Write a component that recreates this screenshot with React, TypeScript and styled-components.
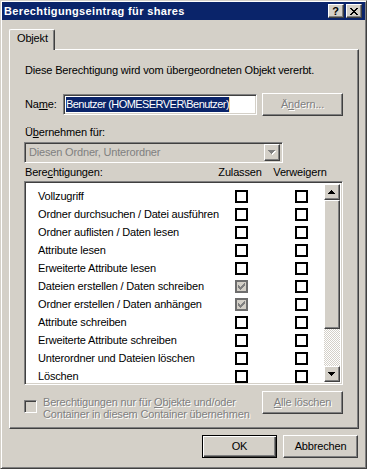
import styled, { createGlobalStyle, css } from 'styled-components'

const GlobalStyle = createGlobalStyle`
    html, body {
        margin: 0;
        padding: 0;
        background: #d4d0c8;
    }
    body {
        font-family: "Liberation Sans", Arial, sans-serif;
        font-size: 11px;
        letter-spacing: -0.17px;
        color: #000;
    }
`

const raised = css`
    box-sizing: border-box;
    background: #d4d0c8;
    border: 1px solid;
    border-color: #fff #404040 #404040 #fff;
    box-shadow: inset -1px -1px #808080;
`
const sunken = css`
    box-sizing: border-box;
    border: 1px solid;
    border-color: #808080 #fff #fff #808080;
    box-shadow: inset 1px 1px #404040, inset -1px -1px #d4d0c8;
`
const disabledText = css`
    color: #808080;
    text-shadow: 1px 1px #fff;
`

const Window = styled.div`
    width: 367px;
    height: 469px;
    box-sizing: border-box;
    background: #d4d0c8;
    border: 1px solid;
    border-color: #d4d0c8 #404040 #404040 #d4d0c8;
    box-shadow: inset 1px 1px #fff, inset -1px -1px #808080;
    padding: 1px;
    display: flex;
    flex-direction: column;
`
const TitleBar = styled.div`
    height: 18px;
    background: #0a246a;
    display: flex;
    align-items: center;
    padding: 0 3px 0 2px;
`
const TitleText = styled.div`
    flex: 1;
    color: #fff;
    font-weight: bold;
    letter-spacing: 0.35px;
    line-height: 13px;
`
const TitleButton = styled.div`
    ${raised};
    width: 16px;
    height: 14px;
    margin-left: 2px;
    display: flex;
    align-items: center;
    justify-content: center;
    font-weight: bold;
    font-size: 11px;
    line-height: 10px;
    padding-right: 1px;
`
const Body = styled.div`
    flex: 1;
    display: flex;
    flex-direction: column;
    padding: 9px 6px 0 7px;
`
const TabStrip = styled.div`
    display: flex;
    height: 20px;
    align-items: flex-start;
`
const Tab = styled.div`
    position: relative;
    z-index: 1;
    box-sizing: border-box;
    width: 46px;
    height: 21px;
    background: #d4d0c8;
    border-left: 1px solid #fff;
    border-top: 1px solid #fff;
    border-right: 1px solid #404040;
    border-radius: 2px 2px 0 0;
    box-shadow: inset -1px 0 #808080;
    padding: 2px 0 0 7px;
    line-height: 13px;
`
const Panel = styled.div`
    box-sizing: border-box;
    background: #d4d0c8;
    border: 1px solid;
    border-color: #fff #404040 #404040 #fff;
    box-shadow: inset -1px -1px #808080;
    padding: 14px 15px 14px 14px;
    display: flex;
    flex-direction: column;
`
const Text = styled.div<{ $gap?: number }>`
    margin-top: ${(p) => p.$gap ?? 0}px;
    line-height: 13px;
    padding-left: 1px;
`
const Key = styled.span`
    text-decoration: underline;
`
const Row = styled.div<{ $gap: number; $height: number }>`
    margin-top: ${(p) => p.$gap}px;
    height: ${(p) => p.$height}px;
    display: flex;
    align-items: center;
`
const NameLabel = styled.div`
    width: 38px;
    padding-left: 1px;
    line-height: 13px;
`
const NameInput = styled.div`
    ${sunken};
    width: 194px;
    height: 21px;
    background: #fff;
    padding: 2px;
    display: flex;
    align-items: center;
`
const Selection = styled.span`
    background: #0a246a;
    color: #fff;
    line-height: 15px;
    letter-spacing: -0.55px;
    white-space: nowrap;
`
const Caret = styled.span`
    width: 1px;
    height: 15px;
    background: #f5db95;
`
const Button = styled.div<{ $width: number; $default?: boolean; $disabled?: boolean }>`
    box-sizing: border-box;
    width: ${(p) => p.$width}px;
    height: 23px;
    background: #d4d0c8;
    display: flex;
    align-items: center;
    justify-content: center;
    line-height: 13px;
    ${(p) =>
        p.$default
            ? css`
                  border: 1px solid #000;
                  box-shadow: inset 1px 1px #fff, inset -1px -1px #404040,
                      inset -2px -2px #808080;
              `
            : css`
                  border: 1px solid;
                  border-color: #fff #404040 #404040 #fff;
                  box-shadow: inset -1px -1px #808080;
              `}
    ${(p) => p.$disabled && disabledText};
`
const Combo = styled.div`
    ${sunken};
    width: 259px;
    height: 21px;
    margin-top: 3px;
    background: #d4d0c8;
    padding: 2px;
    display: flex;
    align-items: center;
`
const ComboText = styled.div`
    flex: 1;
    color: #808080;
    padding-left: 2px;
    line-height: 13px;
`
const ComboButton = styled.div`
    ${raised};
    width: 16px;
    height: 17px;
    display: flex;
    align-items: center;
    justify-content: center;
`
const HeaderRow = styled.div`
    margin-top: 3px;
    display: grid;
    grid-template-columns: 186px 60px 60px;
    line-height: 13px;
`
const HeaderCell = styled.div<{ $center?: boolean }>`
    text-align: ${(p) => (p.$center ? 'center' : 'left')};
    padding-left: ${(p) => (p.$center ? 0 : 1)}px;
`
const ListBox = styled.div`
    ${sunken};
    margin-top: 2px;
    height: 204px;
    background: #fff;
    padding: 2px;
    display: flex;
`
const ListRows = styled.div`
    flex: 1;
    padding: 3px 0 0 11px;
`
const ListRow = styled.div`
    height: 18px;
    display: grid;
    grid-template-columns: 197px 13px 47px 13px;
    align-items: center;
    line-height: 13px;
    white-space: nowrap;
`
const Box = styled.div<{ $checked?: boolean }>`
    box-sizing: border-box;
    width: 13px;
    height: 13px;
    border: 2px solid ${(p) => (p.$checked ? '#6e6e6e' : '#000')};
    background: ${(p) => (p.$checked ? '#d4d0c8' : '#fff')};
    display: flex;
    align-items: center;
    justify-content: center;
`
const Scrollbar = styled.div`
    width: 16px;
    display: flex;
    flex-direction: column;
`
const ScrollButton = styled.div`
    ${raised};
    height: 16px;
    display: flex;
    align-items: center;
    justify-content: center;
`
const Thumb = styled.div`
    ${raised};
    height: 129px;
`
const Track = styled.div`
    flex: 1;
    background: repeating-conic-gradient(#d4d0c8 0 25%, #fff 0 50%) 0 0 / 2px 2px;
`
const BottomRow = styled.div`
    margin-top: 6px;
    height: 23px;
    display: flex;
    align-items: flex-start;
`
const SunkenCheck = styled.div`
    ${sunken};
    width: 13px;
    height: 13px;
    margin-top: 9px;
    background: #d4d0c8;
`
const BottomText = styled.div`
    ${disabledText};
    margin: 5px 0 0 6px;
    line-height: 12px;
    white-space: nowrap;
`
const Spacer = styled.div`
    flex: 1;
`
const Footer = styled.div`
    margin-top: 6px;
    display: flex;
    justify-content: flex-end;
    gap: 6px;
    padding-right: 1px;
`

const CloseGlyph = () => (
    <svg width="8" height="7" viewBox="0 0 8 7">
        <path
            fill="#000"
            d="M0 0h2v1H0z M6 0h2v1H6z M1 1h2v1H1z M5 1h2v1H5z M2 2h4v1H2z M3 3h2v1H3z M2 4h4v1H2z M1 5h2v1H1z M5 5h2v1H5z M0 6h2v1H0z M6 6h2v1H6z"
        />
    </svg>
)

const CheckGlyph = () => (
    <svg width="7" height="7" viewBox="0 0 7 7">
        <path
            fill="#808080"
            d="M6 0h1v1H6z M5 1h2v1H5z M0 2h1v1H0z M4 2h3v1H4z M0 3h2v1H0z M3 3h3v1H3z M0 4h5v1H0z M1 5h3v1H1z M2 6h1v1H2z"
        />
    </svg>
)

const upPath = 'M3 0h1v1H3z M2 1h3v1H2z M1 2h5v1H1z M0 3h7v1H0z'
const downPath = 'M0 0h7v1H0z M1 1h5v1H1z M2 2h3v1H2z M3 3h1v1H3z'

const Arrow = ({ up, disabled }: { up?: boolean; disabled?: boolean }) => (
    <svg width="8" height="5" viewBox="0 0 8 5">
        {disabled && (
            <path fill="#fff" transform="translate(1 1)" d={up ? upPath : downPath} />
        )}
        <path fill={disabled ? '#808080' : '#000'} d={up ? upPath : downPath} />
    </svg>
)

const permissions = [
    { label: 'Vollzugriff' },
    { label: 'Ordner durchsuchen / Datei ausführen' },
    { label: 'Ordner auflisten / Daten lesen' },
    { label: 'Attribute lesen' },
    { label: 'Erweiterte Attribute lesen' },
    { label: 'Dateien erstellen / Daten schreiben', allow: true },
    { label: 'Ordner erstellen / Daten anhängen', allow: true },
    { label: 'Attribute schreiben' },
    { label: 'Erweiterte Attribute schreiben' },
    { label: 'Unterordner und Dateien löschen' },
    { label: 'Löschen' },
]

const App = () => {
    return (
        <>
            <GlobalStyle />
            <Window>
                <TitleBar>
                    <TitleText>Berechtigungseintrag für shares</TitleText>
                    <TitleButton>?</TitleButton>
                    <TitleButton>
                        <CloseGlyph />
                    </TitleButton>
                </TitleBar>
                <Body>
                    <TabStrip>
                        <Tab>Objekt</Tab>
                    </TabStrip>
                    <Panel>
                        <Text>Diese Berechtigung wird vom übergeordneten Objekt vererbt.</Text>
                        <Row $gap={16} $height={23}>
                            <NameLabel>
                                Na<Key>m</Key>e:
                            </NameLabel>
                            <NameInput>
                                <Selection>Benutzer (HOMESERVER\Benutzer)</Selection>
                                <Caret />
                            </NameInput>
                            <Spacer />
                            <Button $width={81} $disabled>
                                Ä<Key>n</Key>dern...
                            </Button>
                        </Row>
                        <Text $gap={10}>
                            Ü<Key>b</Key>ernehmen für:
                        </Text>
                        <Combo>
                            <ComboText>Diesen Ordner, Unterordner</ComboText>
                            <ComboButton>
                                <Arrow disabled />
                            </ComboButton>
                        </Combo>
                        <HeaderRow>
                            <HeaderCell>
                                Bere<Key>c</Key>htigungen:
                            </HeaderCell>
                            <HeaderCell $center>Zulassen</HeaderCell>
                            <HeaderCell $center>Verweigern</HeaderCell>
                        </HeaderRow>
                        <ListBox>
                            <ListRows>
                                {permissions.map((p) => (
                                    <ListRow key={p.label}>
                                        <span>{p.label}</span>
                                        <Box $checked={p.allow}>{p.allow && <CheckGlyph />}</Box>
                                        <span />
                                        <Box />
                                    </ListRow>
                                ))}
                            </ListRows>
                            <Scrollbar>
                                <ScrollButton>
                                    <Arrow up />
                                </ScrollButton>
                                <Thumb />
                                <Track />
                                <ScrollButton>
                                    <Arrow />
                                </ScrollButton>
                            </Scrollbar>
                        </ListBox>
                        <BottomRow>
                            <SunkenCheck />
                            <BottomText>
                                Berechtigungen nur für <Key>O</Key>bjekte und/oder
                                <br />
                                Container in diesem Container übernehmen
                            </BottomText>
                            <Spacer />
                            <Button $width={81} $disabled>
                                <Key>A</Key>lle löschen
                            </Button>
                        </BottomRow>
                    </Panel>
                    <Footer>
                        <Button $width={75} $default>
                            OK
                        </Button>
                        <Button $width={75}>Abbrechen</Button>
                    </Footer>
                </Body>
            </Window>
        </>
    )
}

export default App
